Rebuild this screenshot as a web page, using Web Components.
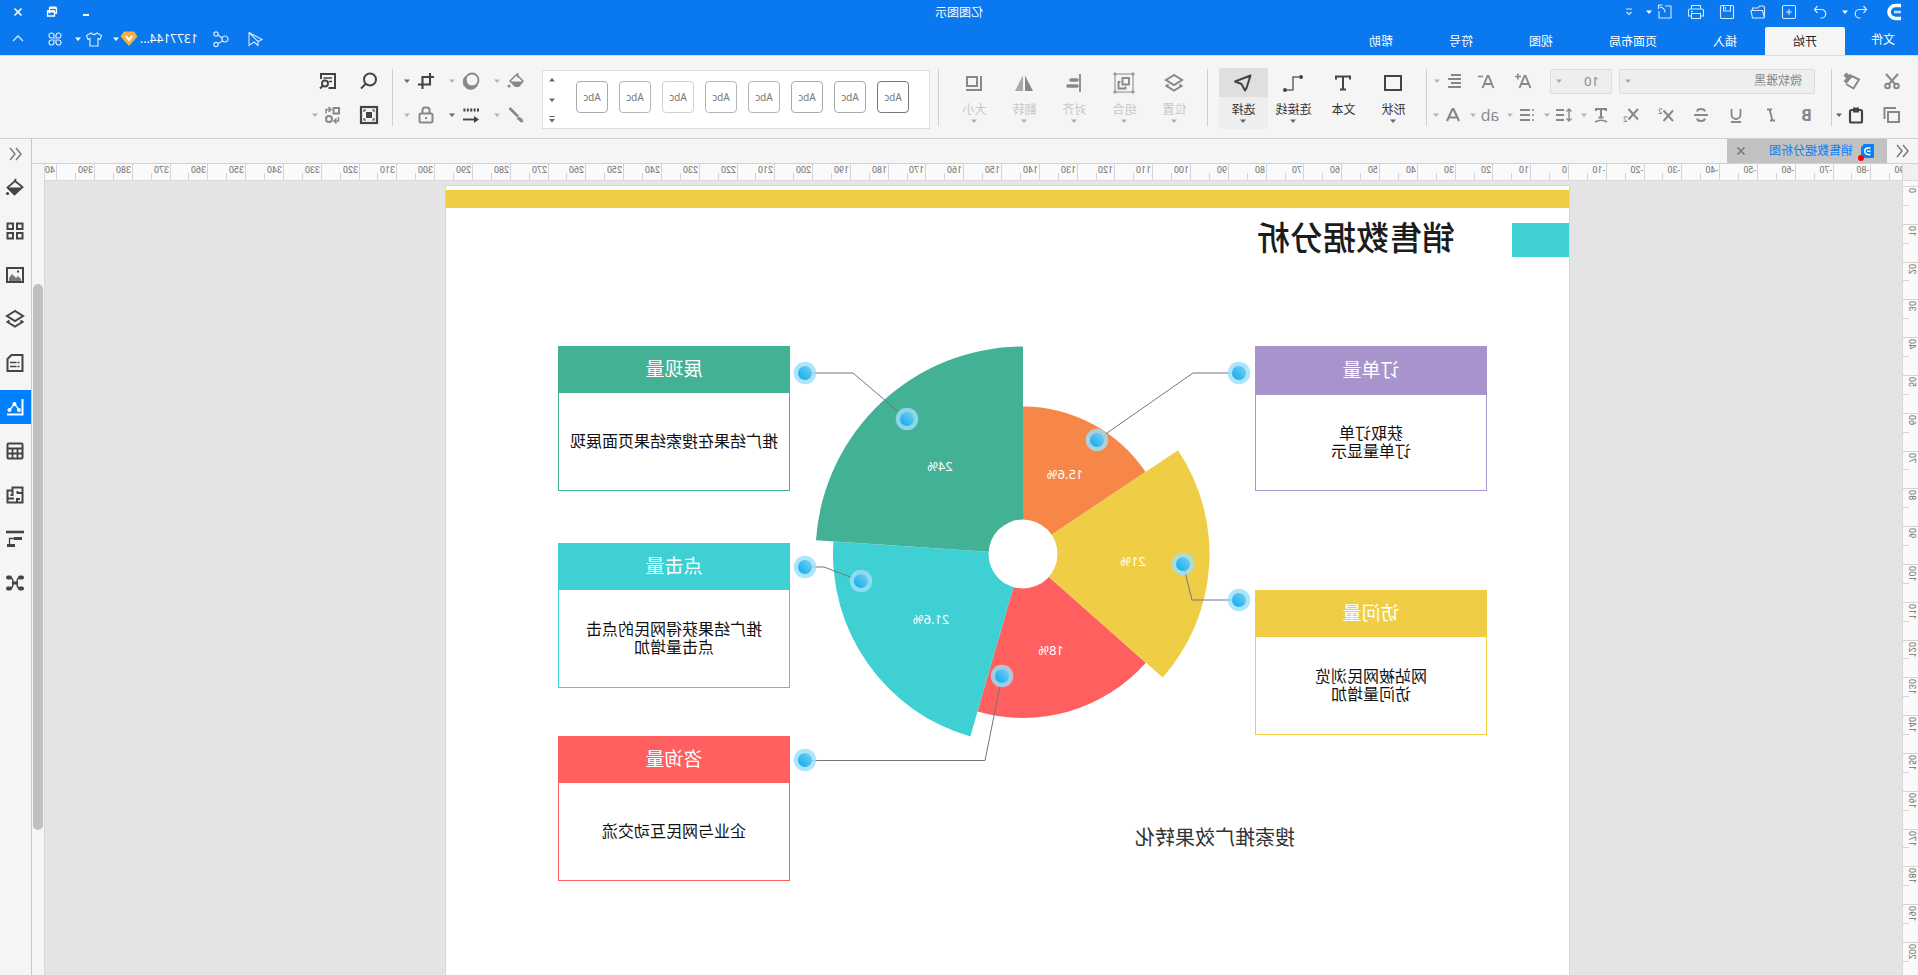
<!DOCTYPE html>
<html lang="zh-CN">
<head>
<meta charset="utf-8">
<title>亿图图示</title>
<style>
  html, body { margin: 0; height: 100%; }
  body {
    font: 12px/16px "Noto Sans", "Noto Sans CJK SC", sans-serif;
    color: #333;
    background: #f5f5f5;
    overflow: hidden;
  }
</style>
</head>
<body>
<app-shell></app-shell>
<script>
/* ---------- icons: 18 x 18 grid, drawn with currentColor ---------- */
const ICONS = {
  logo: '<path d="M2 2.500h5.500a6.500 6.500 0 0 1 0 13h-5.500" stroke-width="3.600"/><path d="M2 9h7" stroke-width="2.600" opacity=".75"/>',
  undo: '<path d="M6.500 3 3.500 6.500l3 3.500M3.500 6.500h7a4 4 0 0 1 0 8.500h-1" stroke-width="1.200"/>',
  redo: '<path d="M11.500 3l3 3.500-3 3.500M14.500 6.500h-7a4 4 0 0 0 0 8.500h1" stroke-width="1.200"/>',
  add: '<rect x="2.500" y="2.500" width="13" height="13" rx="1.500" stroke-width="1.100"/><path d="M9 6v6M6 9h6" stroke-width="1.100"/>',
  folder: '<path d="M2.500 14.500v-10q0-1.500 1.500-1.500h3.500l1.500 2h5.500v2.500M2.500 14.500l2-7h11.500l-1.500 7.500h-11q-1 0-1-.500" stroke-width="1.100"/>',
  save: '<path d="M3.500 2.500h11q1 0 1 1v11q0 1-1 1h-11q-1 0-1-1v-11q0-1 1-1zM5.500 2.500v5.500h7v-5.500M10.500 4v2.500" stroke-width="1.100"/>',
  print: '<path d="M4.500 6v-3.500h9v3.500M4.500 13h-3v-5.500q0-1.500 1.500-1.500h12q1.500 0 1.500 1.500v5.500h-3M4.500 10.500h9v5h-9zM12 8.500h2" stroke-width="1.100"/>',
  export: '<path d="M9 3h-6v12h12v-4M9 9.500q0-5 5.500-5.500M11.500 2h4v4M15 11V8" stroke-width="1.100"/>',
  more: '<path d="M6 6h6M6.500 9l2.500 2.500 2.500-2.500" stroke-width="1.200"/>',
  min: '<path d="M6 12h6" stroke-width="2"/>',
  restore: '<path d="M4.500 5h7v5.500M4.500 5v5h2M6.500 8h7v5h-7z" stroke-width="1.300"/><path d="M4.500 4.500h7M6.500 8.500h7" stroke-width="2"/>',
  close: '<path d="M5.500 5.500l7 7M12.500 5.500l-7 7" stroke-width="1.600"/>',
  send: '<path d="M16 2.500 3 9.500l4 2zM16 2.500v13l-5-3.500-4 3.500v-4M16 2.500 7 11.500" stroke-width="1.100"/>',
  share: '<circle cx="5" cy="9" r="3" stroke-width="1.200"/><circle cx="14" cy="4" r="2.200" stroke-width="1.200"/><circle cx="14" cy="14.500" r="2.200" stroke-width="1.200"/><path d="M8 8l4-3M7.500 11l4.500 2.500" stroke-width="1.200"/>',
  gem: '<path d="M4 1.500h10l3.500 5L9 16 .500 6.500z" fill="#f5b041" stroke="none"/><path d="M6 6l3 4 3-4" stroke="#fff" stroke-width="2"/>',
  shirt: '<path d="M6 3q3 3 6 0l4.500 2.500-1.500 4-2-1v7.500H5V8.500l-2 1-1.500-4z" stroke-width="1.200"/>',
  clover: '<path d="M8 8H5.500A2.500 2.500 0 1 1 8 5.500zM10 8h2.500A2.500 2.500 0 1 0 10 5.500zM8 10H5.500A2.500 2.500 0 1 0 8 12.500zM10 10h2.500A2.500 2.500 0 1 1 10 12.500z" stroke-width="1.200"/>',
  up: '<path d="M4 11l5-5 5 5" stroke-width="1.300"/>',
  cut: '<circle cx="4.500" cy="14" r="2.300" stroke-width="2"/><circle cx="13.500" cy="14" r="2.300" stroke-width="2"/><path d="M3 2l9 10M15 2 6 12" stroke-width="2"/>',
  painter: '<path d="M9.500 3l6.500 7.500" stroke-width="4"/><path d="M13 5l3-3" stroke-width="4.500"/><path d="M9.500 4 2 7.500l5.500 9 7.500-4.500" stroke-width="2"/>',
  copy: '<rect x="2" y="6" width="11" height="10" stroke-width="2"/><path d="M5 2h11.500v11" stroke-width="2"/>',
  paste: '<rect x="3" y="4" width="12" height="12.500" rx="1.500" stroke-width="2.200"/><path d="M6 2.500h6M6 5.500h6" stroke-width="2"/>',
  italic: '<path d="M8 3.500h5M5 14.500h5M10.500 3.500l-3 11" stroke-width="1.800"/>',
  under: '<path d="M4.500 3v5.500a4.500 4.500 0 0 0 9 0V3M4 16h10" stroke-width="1.800"/>',
  strike: '<path d="M13 5.500Q12.500 3 9 3T5 5.500M5 12.500Q5.500 15 9 15t4-2.500M2 9h14" stroke-width="1.900"/>',
  sup: '<path d="M2 4.500l9.500 10.500M11.500 4.500 2 15" stroke-width="2"/><path d="M13 4q0-1.500 1.500-1.500T16 4q0 1-3 3.500h3.500" stroke-width="1"/>',
  sub: '<path d="M2 3l9.500 10.500M11.500 3 2 13.500" stroke-width="2"/><path d="M13 12q0-1.500 1.500-1.500T16 12q0 1-3 3.500h3.500" stroke-width="1"/>',
  tarc: '<path d="M4 5V3h10v2M9 3v8.500M6.500 11.500h5" stroke-width="2"/><path d="M3 16q6-3.500 12 0" stroke-width="1.500"/>',
  spacing: '<path d="M4 3v12M1.500 5.500 4 3l2.500 2.500M1.500 12.500 4 15l2.500-2.500" stroke-width="1.400"/><path d="M9 4h8M9 9h8M9 14h8" stroke-width="2"/>',
  list: '<path d="M2 4h2M2 9h2M2 14h2" stroke-width="1.600"/><path d="M6 4h10M6 9h10M6 14h10" stroke-width="2"/>',
  align: '<path d="M2 4h10M2 8h13M2 12h10M2 16h13" stroke-width="1.900" transform="translate(0 -1)"/>',
  fontup: '<path d="M1.500 16 6.500 4h1l5 12M3.500 12h7" stroke-width="1.900"/><path d="M14 1.500v6M11 4.500h6" stroke-width="1.600"/>',
  fontdown: '<path d="M1.500 16 6.500 4h1l5 12M3.500 12h7" stroke-width="1.900"/><path d="M12 4.500h5" stroke-width="1.600"/>',
  fontcolor: '<path d="M3 15 8.500 3h1L15 15M5 11.500h8" stroke-width="2.200"/>',
  shape: '<rect x="1" y="2" width="16" height="14" stroke-width="2"/>',
  text: '<path d="M2 5.500V2.500h14v3M9 2.500v13M6 15.500h6" stroke-width="2"/>',
  connector: '<circle cx="1" cy="3" r="2" fill="currentColor" stroke="none"/><circle cx="17" cy="16" r="2" fill="currentColor" stroke="none"/><path d="M3 3h6v13h6" stroke-width="1.500" opacity=".8"/>',
  select: '<path d="M1.500 1.500 17 7.500l-6.500 2.500L7 16.500 5.500 14z" stroke-width="2" stroke-linejoin="round"/>',
  layers: '<path d="M9 1 17 6 9 11 1 6zM3.500 10.500 1.500 12 9 16.500 16.500 12l-2-1.500" stroke-width="2"/>',
  group: '<rect x="0" y="0" width="18" height="18" stroke-width="1"/><path d="M-1-1h2v2h-2zM17-1h2v2h-2zM-1 17h2v2h-2zM17 17h2v2h-2z" stroke-width="1" fill="#f5f5f5"/><rect x="4" y="4" width="6.500" height="6.500" stroke-width="1.900"/><path d="M12.500 8h2v6.500H7.500V12.500" stroke-width="1.900"/>',
  alignobj: '<path d="M3 0v18" stroke-width="1.800"/><path d="M6 6h6M6 12h9" stroke-width="3.600" stroke-linecap="round"/>',
  flip: '<path d="M8 1.500V17H0z" fill="currentColor" stroke="none"/><path d="M10 1.500V17h8z" fill="currentColor" stroke="none" opacity=".7"/>',
  size: '<rect x="6" y="3" width="10" height="9" stroke-width="2"/><path d="M2 2v14h15" stroke-width="2"/>',
  bucket: '<path d="M8.500 2.500 15 9l-5 5H6L2 9z" stroke-width="1.500"/><path d="M3 9.500h11L9.500 15h-3z" fill="currentColor" stroke="none"/><path d="M7.500 5.500 7 1" stroke-width="1.400"/><circle cx="16" cy="14" r="1.500" fill="currentColor" stroke="none"/>',
  brush: '<path d="M15.500 2 7 10.500" stroke-width="2.600"/><path d="M6 10.500l2.500 2L4 16.500l-2.500-.500 1-3z" fill="currentColor" stroke="none"/>',
  shadow: '<circle cx="8" cy="8" r="6.500" stroke-width="1.800"/><path d="M14 4a7.500 7.500 0 1 1-11.500 9q7 3.500 10.500-1.500 2-3.500 1-7.500z" fill="currentColor"/>',
  line: '<path d="M1 4h16" stroke-width="3" stroke-dasharray="2 1.400"/><path d="M5 13.500h12" stroke-width="1.900"/><path d="M6 10v7l-5-3.500z" fill="currentColor" stroke="none"/>',
  crop: '<path d="M5 1v11.500h12M1 5h11.500V17" stroke-width="2.100"/>',
  lock: '<rect x="2.500" y="7.500" width="13" height="9" rx="1.500" stroke-width="2"/><path d="M5.500 7V4q0-2.500 2.500-2.500h2q2.500 0 2.500 2.500v3" stroke-width="2"/><path d="M8 11h2v2H8z" fill="currentColor" stroke="none"/>',
  search: '<circle cx="8" cy="7.500" r="6" stroke-width="2"/><path d="M12.500 12l4.500 4.500" stroke-width="2"/>',
  fit: '<rect x="1" y="1" width="16" height="16" stroke-width="2.200"/><path d="M6 6h6v6H6z" fill="currentColor" stroke="none"/><path d="M4 6V4h2M12 4h2v2M4 12v2h2M12 14h2v-2" stroke-width="1.100"/>',
  findlist: '<path d="M8.500 16H2V2h14v5" stroke-width="2"/><path d="M5 6h8.500M5 9.500h3" stroke-width="1.700"/><circle cx="12" cy="11.500" r="3" stroke-width="1.900"/><path d="M14 13.500l3 3" stroke-width="2"/>',
  replace: '<rect x="2" y="2" width="5.500" height="5.500" stroke-width="2"/><circle cx="12" cy="13" r="3" stroke-width="2"/><path d="M11 3.500h4V7.500M12.500 1l-2.500 2.500 2.500 2.500M2.500 11v4h4M4.500 12.500l2.500 2.500-2.500 2.500" stroke-width="1.500"/>',
  back: '<path d="M8 3 3 9l5 6M14 3 9 9l5 6" stroke-width="1.400"/>',
  doc: '<path d="M2 2h10l3 3v10.500Q15 16 14 16H3q-1 0-1-1z" fill="#0a80f5" stroke="none"/><path d="M5.500 6H8a3.200 3.200 0 0 1 0 6.400H5.500M5.500 9.200H9" stroke="#fff" stroke-width="1.500"/>',
  fill: '<path d="M8 1l2 3 6.500 5.500-7 7L1.500 9 9 3" stroke-width="1.800"/><path d="M2.500 9.500h14l-7 7z" fill="currentColor" stroke="none"/><circle cx="16.500" cy="15.500" r="1.600" fill="currentColor" stroke="none"/>',
  grid: '<path d="M1.500 1.500h5.500v5.500H1.500zM11 1.500h5.500v5.500H11zM1.500 11h5.500v5.500H1.500zM11 11h5.500v5.500H11z" stroke-width="2"/>',
  image: '<rect x="1" y="2" width="16" height="14" stroke-width="2"/><path d="M3 15v-2l3-3 2 2 4-4 3 4v3z" fill="currentColor" stroke="none" opacity=".7"/><path d="M5 5.500h2" stroke-width="2"/>',
  page: '<path d="M1.500 1h11l4 4v12h-15z" stroke-width="2"/><path d="M4.500 8.500h2M4.500 12.500h2M7.500 8.500h6.500M7.500 12.500h6.500" stroke-width="1.700"/>',
  chart: '<path d="M1.500 1v15.500H17" stroke-width="2"/><path d="M5 11.500 9.500 6l5 6" stroke-width="1.200"/><path d="M5 10a2 2 0 1 0 .1 0zM9.500 4a2 2 0 1 0 .1 0zM14.500 10a2 2 0 1 0 .1 0z" fill="currentColor" stroke="none"/>',
  table: '<rect x="1.500" y="1.500" width="15" height="15" rx="1" stroke-width="2"/><path d="M2 6.500h14.500M2 11.500h14.500M6.500 6.500v10M11.500 6.500v10" stroke-width="1.800"/>',
  plan: '<path d="M1.500 1.500h10v3h5v12h-15zM1.500 7h5v-2M7 16.500v-3.500h-3M11.500 4.500V9h2M10 12.500h6" stroke-width="2"/>',
  gantt: '<path d="M0 2h18" stroke-width="2.600"/><path d="M2 8.500h8M9 15.500h8" stroke-width="3"/><path d="M9 8.500h5.500V15" stroke-width="1.300"/>',
  mind: '<path d="M3.500 3.500Q7 3 7 9t-3.500 5.500M14.500 3.500Q11 3 11 9t3.500 5.500" stroke-width="1.500"/><path d="M6 9h6" stroke-width="3"/><path d="M2 3.500h2M14 3.500h2M2 14.500h2M14 14.500h2" stroke-width="4" stroke-linecap="round"/>',
  down: '<path d="M6 7.500h6l-3 3.500z" fill="currentColor" stroke="none"/>',
  upsmall: '<path d="M6 10.500h6l-3-3.500z" fill="currentColor" stroke="none"/>',
  moredown: '<path d="M6.500 6.500h5" stroke-width="1.200"/><path d="M6 9h6l-3 3.500z" fill="currentColor" stroke="none"/>'
};

/* Base class: fills an open shadow root once the element is attached. */
class Part extends HTMLElement {
  constructor() { super(); this.attachShadow({ mode: "open" }); }
  connectedCallback() { this.shadowRoot.innerHTML = this.render(); }
  render() { return ""; }
}

/* <ui-icon name> */
customElements.define("ui-icon", class extends Part {
  render() {
    return `<style>
      :host { display: block; width: 18px; height: 18px; flex: none; }
      svg { display: block; width: 100%; height: 100%; overflow: visible; }
    </style>
    <svg viewBox="0 0 18 18" fill="none" stroke="currentColor" aria-hidden="true">${ICONS[this.getAttribute("name")] || ""}</svg>`;
  }
});

/* <tool-button icon label [caret]>: an icon, or slotted text, with an optional arrow */
customElements.define("tool-button", class extends Part {
  render() {
    const icon = this.getAttribute("icon");
    return `<style>
      :host { display: flex; align-items: center; }
      button {
        display: flex; align-items: center; padding: 0; margin: 0; border: 0;
        background: none; color: inherit; font: inherit; height: 24px;
      }
      .face { display: flex; justify-content: center; align-items: center; min-width: var(--face, 26px); }
      .caret { width: 8px; display: flex; justify-content: center; color: var(--caret, inherit); }
    </style>
    <button type="button" aria-label="${this.getAttribute("label")}">
      <span class="face">${icon ? `<ui-icon name="${icon}"></ui-icon>` : "<slot></slot>"}</span>
      ${this.hasAttribute("caret") ? `<span class="caret"><ui-icon name="down"></ui-icon></span>` : ""}
    </button>`;
  }
});

/* <big-button icon [caret] [selected] [disabled]>label</big-button> */
customElements.define("big-button", class extends Part {
  render() {
    return `<style>
      :host { display: block; width: 50px; }
      button {
        display: flex; flex-direction: column; align-items: center; width: 49px; height: 61px;
        padding: 0; border: 0; border-radius: 2px; background: none; color: #333; font: inherit;
      }
      .top { align-self: stretch; height: 29px; display: flex; justify-content: center; align-items: center; color: #444; }
      .label { height: 16px; margin-top: 5px; white-space: nowrap; }
      .caret { height: 6px; display: flex; align-items: center; color: #666; }
      :host([selected]) button { background: #eee; }
      :host([selected]) .top { background: #dfdfdf; }
      :host([disabled]) button { color: #c8c8c8; }
      :host([disabled]) .top { color: #888; }
      :host([disabled]) .caret { color: #b0b0b0; }
    </style>
    <button type="button" ${this.hasAttribute("disabled") ? "disabled" : ""}>
      <span class="top"><ui-icon name="${this.getAttribute("icon")}"></ui-icon></span>
      <span class="label"><slot></slot></span>
      ${this.hasAttribute("caret") ? `<span class="caret"><ui-icon name="down"></ui-icon></span>` : ""}
    </button>`;
  }
});

/* Blue header: quick access, window title, menu tabs, account */
customElements.define("title-bar", class extends Part {
  render() {
    return `<style>
      :host { display: block; background: #0a78ee; color: #fff; --caret: #fff; }
      .top { display: grid; grid-template-columns: 1fr auto 1fr; height: 24px; align-items: center; }
      .quick { display: flex; align-items: center; padding-left: 15px; --face: 24px; }
      .quick .logo { margin-right: 12px; color: #fff; }
      .quick tool-button { color: #d5e8fd; }
      .quick .wide { --face: 31px; }
      .quick .first { margin-left: 5px; }
      .quick .gap { margin-left: 4px; }
      h1 { margin: 0; padding-top: 2px; font: inherit; }
      .window { display: flex; justify-content: flex-end; padding-right: 1px; --face: 34px; }
      .bottom { display: flex; height: 31px; align-items: flex-end; justify-content: space-between; }
      nav { display: flex; }
      nav a { color: #fff; text-decoration: none; padding: 7px 28px 5px; height: 16px; }
      nav a.file { padding: 5px 26px 7px 23px; }
      nav a.on { background: #f5f5f5; color: #222; border-radius: 2px 2px 0 0; }
      .account { display: flex; align-items: center; height: 31px; box-sizing: border-box; padding: 0 1px 2px 0; --face: 35px; color: #d5e8fd; }
      .user { display: flex; align-items: center; color: #fff; --face: 16px; margin: 0 5px 0 6px; gap: 2px; }
      .user button { padding: 0; border: 0; background: none; color: inherit; font: inherit; }
      .shirt { --face: 25px; margin-right: 1px; }
      .apps { margin-right: 2px; }
    </style>
    <div class="top">
      <div class="quick">
        <ui-icon class="logo" name="logo"></ui-icon>
        <tool-button icon="undo" label="撤销" caret></tool-button>
        <tool-button class="wide first" icon="redo" label="恢复"></tool-button>
        <tool-button class="wide" icon="add" label="新建"></tool-button>
        <tool-button class="wide" icon="folder" label="打开"></tool-button>
        <tool-button class="wide" icon="save" label="保存"></tool-button>
        <tool-button class="wide" icon="print" label="打印"></tool-button>
        <tool-button class="gap" icon="export" label="导出" caret></tool-button>
        <tool-button class="gap" icon="more" label="自定义"></tool-button>
      </div>
      <h1>亿图图示</h1>
      <div class="window">
        <tool-button icon="min" label="最小化"></tool-button>
        <tool-button icon="restore" label="还原"></tool-button>
        <tool-button icon="close" label="关闭"></tool-button>
      </div>
    </div>
    <div class="bottom">
      <nav>
        <a class="file" href="#file">文件</a><a class="on" href="#home">开始</a><a href="#insert">插入</a><a href="#layout">页面布局</a><a href="#view">视图</a><a href="#symbol">符号</a><a href="#help">帮助</a>
      </nav>
      <div class="account">
        <tool-button icon="send" label="发送"></tool-button>
        <tool-button icon="share" label="分享"></tool-button>
        <span class="user"><button type="button">1377144...</button><tool-button icon="gem" label="会员" caret></tool-button></span>
        <tool-button class="shirt" icon="shirt" label="主题" caret></tool-button>
        <tool-button class="apps" icon="clover" label="应用"></tool-button>
        <tool-button icon="up" label="收起"></tool-button>
      </div>
    </div>`;
  }
});

/* <drop-list label value>: a real select with the flat look of the ribbon */
customElements.define("drop-list", class extends Part {
  render() {
    return `<style>
      :host { display: grid; align-items: center; height: 25px; color: #888; }
      select, ui-icon { grid-area: 1 / 1; }
      select {
        appearance: none; width: 100%; height: 25px; box-sizing: border-box; margin: 0; padding: 0 12px;
        border: 1px solid #ddd; border-radius: 2px; background: #eee; color: inherit; font: inherit;
      }
      ui-icon { justify-self: end; color: #aaa; pointer-events: none; }
    </style>
    <select aria-label="${this.getAttribute("label")}"><option>${this.getAttribute("value")}</option></select>
    <ui-icon name="down"></ui-icon>`;
  }
});

/* Gallery of shape styles */
customElements.define("style-gallery", class extends Part {
  render() {
    const tones = ["#777", "#aaa", "#aaa", "#b5b5b5", "#b5b5b5", "#d0d0d0", "#b5b5b5", "#aaa"];
    return `<style>
      :host {
        display: flex; justify-content: space-between; box-sizing: border-box; width: 388px; height: 59px;
        background: #fff; border: 1px solid #dcdcdc; padding-left: 20px;
      }
      .items { display: flex; gap: 11px; align-items: flex-start; padding-top: 10px; }
      .items button {
        width: 32px; height: 32px; padding: 0; border: 1px solid; border-radius: 4px; background: #fff;
        font: 10px/14px "Noto Sans", sans-serif;
      }
      .items span { color: #777; }
      .scroll { display: flex; flex-direction: column; justify-content: space-between; color: #666; --face: 16px; }
      .scroll tool-button { height: 18px; }
    </style>
    <div class="items">${tones.map(t => `<button type="button" style="border-color:${t}"><span>Abc</span></button>`).join("")}</div>
    <div class="scroll">
      <tool-button icon="upsmall" label="向上"></tool-button>
      <tool-button icon="down" label="向下"></tool-button>
      <tool-button icon="moredown" label="更多样式"></tool-button>
    </div>`;
  }
});

/* Ribbon of the home tab */
customElements.define("home-ribbon", class extends Part {
  render() {
    return `<style>
      :host {
        display: flex; height: 82px; background: #f5f5f5; color: #888; --caret: #b5b5b5;
        border-top: 1px solid #d3dcea; border-bottom: 1px solid #d1d1d1; padding-left: 6px;
      }
      .rule { flex: none; width: 1px; height: 57px; margin-top: 13px; background: #d0d0d0; }
      .group { flex: none; display: grid; grid-template-rows: 34px 34px; align-content: start; padding-top: 8px; align-items: center; }
      .clip { grid-template-columns: 40px 40px; justify-items: center; }
      .dark { color: #444; --caret: #666; }
      .font { margin: 0 2px 0 7px; }
      .row { display: flex; align-items: center; }
      .row .w35 { width: 35px; justify-content: center; }
      .row .w37 { width: 37px; }
      .row .w32 { width: 32px; }
      .family { width: 196px; margin: 0 7px 0 9px; }
      .size { width: 62px; margin-right: 14px; font-size: 13px; }
      b { font: 700 16px/18px "Open Sans", sans-serif; }
      .ab { font: 16px/18px "Open Sans", sans-serif; }
      .big { flex: none; display: flex; padding-top: 12px; margin: 0 10px 0 8px; }
      style-gallery { flex: none; margin: 14px 11px 0 8px; }
      .paint { grid-template-columns: repeat(3, 45px); --face: 30px; margin-right: 3px; }
      .find { grid-template-columns: 30px 38px; column-gap: 7px; justify-items: center; margin-left: 8px; }
    </style>
    <div class="group clip">
      <tool-button icon="cut" label="剪切"></tool-button>
      <tool-button icon="painter" label="格式刷"></tool-button>
      <tool-button icon="copy" label="复制"></tool-button>
      <tool-button class="dark" icon="paste" label="粘贴" caret></tool-button>
    </div>
    <div class="rule"></div>
    <div class="group font">
      <div class="row">
        <drop-list class="family" label="字体" value="微软雅黑"></drop-list>
        <drop-list class="size" label="字号" value="10"></drop-list>
        <tool-button class="w37" icon="fontup" label="增大字号"></tool-button>
        <tool-button class="w32" icon="fontdown" label="减小字号"></tool-button>
        <tool-button icon="align" label="对齐" caret></tool-button>
      </div>
      <div class="row">
        <tool-button class="w35" label="加粗"><b>B</b></tool-button>
        <tool-button class="w35" icon="italic" label="斜体"></tool-button>
        <tool-button class="w35" icon="under" label="下划线"></tool-button>
        <tool-button class="w35" icon="strike" label="删除线"></tool-button>
        <tool-button class="w35" icon="sup" label="上标"></tool-button>
        <tool-button class="w35" icon="sub" label="下标"></tool-button>
        <tool-button class="w37" icon="tarc" label="文字效果" caret></tool-button>
        <tool-button class="w37" icon="spacing" label="行距" caret></tool-button>
        <tool-button class="w37" icon="list" label="列表" caret></tool-button>
        <tool-button class="w37" label="大小写" caret><span class="ab">ab</span></tool-button>
        <tool-button class="w37" icon="fontcolor" label="字体颜色" caret></tool-button>
      </div>
    </div>
    <div class="rule"></div>
    <div class="big">
      <big-button icon="shape" caret>形状</big-button>
      <big-button icon="text">文本</big-button>
      <big-button icon="connector" caret>连接线</big-button>
      <big-button icon="select" caret selected>选择</big-button>
    </div>
    <div class="rule"></div>
    <div class="big">
      <big-button icon="layers" caret disabled>位置</big-button>
      <big-button icon="group" caret disabled>组合</big-button>
      <big-button icon="alignobj" caret disabled>对齐</big-button>
      <big-button icon="flip" caret disabled>翻转</big-button>
      <big-button icon="size" caret disabled>大小</big-button>
    </div>
    <div class="rule"></div>
    <style-gallery></style-gallery>
    <div class="group paint">
      <tool-button icon="bucket" label="填充" caret></tool-button>
      <tool-button icon="shadow" label="阴影" caret></tool-button>
      <tool-button class="dark" icon="crop" label="裁剪" caret></tool-button>
      <tool-button icon="brush" label="线条颜色" caret></tool-button>
      <tool-button class="dark" icon="line" label="线条样式" caret></tool-button>
      <tool-button icon="lock" label="锁定" caret></tool-button>
    </div>
    <div class="rule"></div>
    <div class="group find">
      <tool-button class="dark" icon="search" label="搜索"></tool-button>
      <tool-button class="dark" icon="findlist" label="查找"></tool-button>
      <tool-button class="dark" icon="fit" label="适应窗口"></tool-button>
      <tool-button icon="replace" label="替换" caret></tool-button>
    </div>`;
  }
});

/* Open documents */
customElements.define("document-tabs", class extends Part {
  render() {
    return `<style>
      :host { display: flex; height: 24px; align-items: stretch; border-bottom: 1px solid #d1d1d1; color: #777; --face: 31px; }
      .tab { display: flex; align-items: center; width: 160px; box-sizing: border-box; padding: 0 3px 0 11px; background: #c2c2c2; --face: 22px; }
      .mark { position: relative; margin-right: 5px; }
      .mark i { position: absolute; right: 0; bottom: -1px; width: 6px; height: 6px; border-radius: 3px; background: #f00; }
      a { flex: 1; color: #0a80f5; text-decoration: none; white-space: nowrap; }
    </style>
    <tool-button icon="back" label="展开符号库"></tool-button>
    <div class="tab">
      <span class="mark"><ui-icon name="doc"></ui-icon><i></i></span>
      <a href="#doc">销售数据分析图</a>
      <tool-button icon="close" label="关闭文档"></tool-button>
    </div>`;
  }
});

/* <mm-ruler axis="x|y" zero from>: a tick every 5 mm, a number every 10 mm, as far as the ruler reaches */
customElements.define("mm-ruler", class extends Part {
  connectedCallback() {
    super.connectedCallback();
    this.observer = new ResizeObserver(() => { this.shadowRoot.innerHTML = this.render(); });
    this.observer.observe(this);
  }
  disconnectedCallback() { this.observer.disconnect(); }
  render() {
    const vertical = this.getAttribute("axis") === "y";
    const length = vertical ? this.clientHeight : this.clientWidth;
    const zero = +this.getAttribute("zero");
    const mm = 96 / 25.4;
    let marks = "";
    for (let v = +this.getAttribute("from"); zero + v * mm < length; v += 5) {
      const at = Math.round(zero + v * mm);
      const major = v % 10 === 0;
      if (vertical) {
        marks += `<path d="M${major ? 0 : 9} ${at}.500H16"/>`;
        if (major) marks += `<text transform="translate(9 ${at + 2}) rotate(-90)" text-anchor="end">${v}</text>`;
      } else {
        marks += `<path d="M${at}.500 ${major ? 0 : 9}V16"/>`;
        if (major) marks += `<text x="${at + 2}" y="9">${v}</text>`;
      }
    }
    return `<style>
      :host { display: block; background: #fafafa; overflow: hidden; }
      svg { display: block; width: 100%; height: 100%; }
      path { stroke: #d4d4d4; }
      text { font: 9px Roboto, sans-serif; fill: #707070; }
    </style><svg aria-hidden="true">${marks}</svg>`;
  }
});

/* <info-card>: coloured heading over a bordered text box */
customElements.define("info-card", class extends Part {
  render() {
    return `<style>
      :host {
        display: flex; flex-direction: column; box-sizing: border-box; width: 232px; height: 145px;
        border: 1px solid var(--tone); background: #fff;
      }
      h3 {
        margin: 0; height: var(--head, 46px); box-sizing: border-box; padding-bottom: 2px;
        display: flex; align-items: center; justify-content: center;
        background: var(--tone); color: #fff; font-size: 19px; font-weight: 400; line-height: 24px;
      }
      p {
        margin: 0; padding-bottom: 2px; flex: 1; display: grid; place-content: center; text-align: center;
        color: #111; font-size: 16px; line-height: 18px; white-space: nowrap;
      }
    </style>
    <h3><slot name="title"></slot></h3>
    <p><slot></slot></p>`;
  }
});

/* Rose chart with its call-out lines and pins */
customElements.define("rose-chart", class extends Part {
  render() {
    const cx = 546, cy = 368;
    const slices = [
      { a: 0, b: 56.200, r: 147.500, fill: "#f78749", text: "15.6%", x: 504, y: 288 },
      { a: 131.500, b: 196.100, r: 164, fill: "#ff605f", text: "18%", x: 518, y: 464 },
      { a: 56.200, b: 131.500, r: 186.500, fill: "#efce46", text: "21%", x: 436, y: 375 },
      { a: 196.100, b: 273.800, r: 190, fill: "#3ed0d3", text: "21.6%", x: 638, y: 433 },
      { a: 273.800, b: 360, r: 207.500, fill: "#43b196", text: "24%", x: 629, y: 280 }
    ];
    const point = (deg, r) => {
      const t = deg * Math.PI / 180;
      return `${(cx - r * Math.sin(t)).toFixed(2)} ${(cy - r * Math.cos(t)).toFixed(2)}`;
    };
    const wedges = slices.map(s =>
      `<path fill="${s.fill}" d="M${cx} ${cy}L${point(s.a, s.r)}A${s.r} ${s.r} 0 0 0 ${point(s.b, s.r)}z"/>`).join("");
    const labels = slices.map(s => `<text x="${s.x}" y="${s.y + 5}">${s.text}</text>`).join("");
    const lines = ["764 187 716 187 662 233", "330 187 376 187 472 254", "330 414 377 414 386 378",
      "764 381 745 381 708 395", "764 574.500 584 574.500 567 490"].map(p => `<polyline points="${p}"/>`).join("");
    const pins = [[764, 187], [662, 233], [472, 254], [330, 187], [386, 378], [330, 414], [764, 381], [708, 395], [567, 490], [764, 574]]
      .map(([x, y]) => `<circle cx="${x}" cy="${y}" r="11.300" fill="#9bdff9" fill-opacity=".82"/><circle cx="${x}" cy="${y}" r="7" fill="url(#pin)"/>`).join("");
    return `<style>
      :host { display: block; }
      svg { display: block; width: 100%; height: 100%; }
      polyline { fill: none; stroke: #6f7782; }
      text { font-size: 13px; fill: #fff; text-anchor: middle; }
    </style>
    <svg role="img" aria-label="搜索推广效果转化">
      <defs><linearGradient id="pin" x1="1" y1="1" x2="0" y2="0">
        <stop offset=".2" stop-color="#1fb2ee"/><stop offset="1" stop-color="#7fcff5"/>
      </linearGradient></defs>
      ${wedges}<circle cx="${cx}" cy="${cy}" r="34.500" fill="#fff"/>${lines}${pins}${labels}
    </svg>`;
  }
});

/* The drawing: an A4 sheet; its objects sit at their own places on the sheet */
customElements.define("drawing-sheet", class extends Part {
  render() {
    return `<style>
      :host { display: block; position: relative; width: 297mm; height: 210mm; background: #fff; outline: 1px solid #d6d6d6; }
      .band, .flag, h2, .note, rose-chart, info-card { position: absolute; margin: 0; }
      .band { left: 0; right: 0; top: 4px; height: 18px; background: #efce46; }
      .flag { left: 0; top: 37px; width: 57px; height: 34px; background: #3ed0d3; }
      h2 { left: 114px; top: 30px; font-size: 33px; line-height: 44px; font-weight: 500; color: #1c1c1c; white-space: nowrap; }
      .note { left: 274px; top: 638px; font-size: 20px; line-height: 28px; color: #333; white-space: nowrap; }
      rose-chart { inset: 0; }
      .orders { left: 82px; top: 160px; --tone: #a893cc; --head: 48px; }
      .visits { left: 82px; top: 404px; --tone: #efce46; }
      .shows { left: 779px; top: 160px; --tone: #43b196; }
      .clicks { left: 779px; top: 357px; --tone: #3ed0d3; }
      .asks { left: 779px; top: 550px; --tone: #ff605f; }
    </style>
    <div class="band"></div>
    <div class="flag"></div>
    <h2>销售数据分析</h2>
    <rose-chart></rose-chart>
    <info-card class="orders"><span slot="title">订单量</span>获取订单<br>订单量显示</info-card>
    <info-card class="visits"><span slot="title">访问量</span>网站被网民浏览<br>访问量增加</info-card>
    <info-card class="shows"><span slot="title">展现量</span>推广结果在搜索结果页面展现</info-card>
    <info-card class="clicks"><span slot="title">点击量</span>推广结果获得网民的点击<br>点击量增加</info-card>
    <info-card class="asks"><span slot="title">咨询量</span>企业与网民互动交流</info-card>
    <p class="note">搜索推广效果转化</p>`;
  }
});

/* Panel switcher at the edge of the window */
customElements.define("side-bar", class extends Part {
  render() {
    const items = [["fill", "填充"], ["grid", "主题"], ["image", "图片"], ["layers", "图层"], ["page", "页面"],
      ["chart", "图表"], ["table", "表格"], ["plan", "平面图"], ["gantt", "甘特图"], ["mind", "思维导图"]];
    return `<style>
      :host { display: flex; flex-direction: column; width: 31px; border-left: 1px solid #c8c8c8; background: #f5f5f5; color: #444; --face: 31px; }
      .fold { height: 26px; padding-top: 4px; box-sizing: border-box; color: #777; }
      .item { height: 34px; margin-bottom: 10px; }
      .fold + .item { margin-top: 5px; }
      .on { background: #0080ff; color: #fff; }
    </style>
    <tool-button class="fold" icon="back" label="折叠"></tool-button>
    ${items.map(([icon, label]) => `<tool-button class="item${icon === "chart" ? " on" : ""}" icon="${icon}" label="${label}"></tool-button>`).join("")}`;
  }
});

/* Document area: tabs, rulers, canvas, scroll bar, side bar */
customElements.define("work-area", class extends Part {
  render() {
    return `<style>
      :host { display: flex; min-height: 0; background: #f5f5f5; }
      .main { flex: 1; min-width: 0; display: flex; flex-direction: column; }
      .desk { flex: 1; min-height: 0; display: grid; grid-template: 17px minmax(0, 1fr) / 16px minmax(0, 1fr) 13px; }
      .corner { background: #f0f0f0; border-bottom: 1px solid #d8d8d8; }
      .across { border-bottom: 1px solid #d8d8d8; border-left: 1px solid #d8d8d8; margin-left: -1px; }
      .canvas { overflow: hidden; background: #e4e4e4; padding: 5px 0 0 333px; border-left: 1px solid #d8d8d8; margin-left: -1px; }
      .track { grid-area: 1 / 3 / 3 / 4; background: #f5f5f5; border-left: 1px solid #d8d8d8; padding: 120px 1px 0; display: grid; grid-template-rows: 79% 1fr; }
      .thumb { background: #c0c0c0; border-radius: 5px; }
    </style>
    <div class="main">
      <document-tabs></document-tabs>
      <div class="desk">
        <div class="corner"></div>
        <mm-ruler class="across" axis="x" zero="333" from="-90"></mm-ruler>
        <div class="track"><div class="thumb"></div></div>
        <mm-ruler axis="y" zero="5" from="0"></mm-ruler>
        <div class="canvas"><drawing-sheet></drawing-sheet></div>
      </div>
    </div>
    <side-bar></side-bar>`;
  }
});

/* Whole window, shown as a mirror view */
customElements.define("app-shell", class extends Part {
  render() {
    return `<style>
      :host { display: flex; flex-direction: column; height: 100vh; transform: scaleX(-1); }
      title-bar, home-ribbon { flex: none; }
      work-area { flex: 1; }
    </style>
    <title-bar></title-bar>
    <home-ribbon></home-ribbon>
    <work-area></work-area>`;
  }
});
</script>
</body>
</html>
